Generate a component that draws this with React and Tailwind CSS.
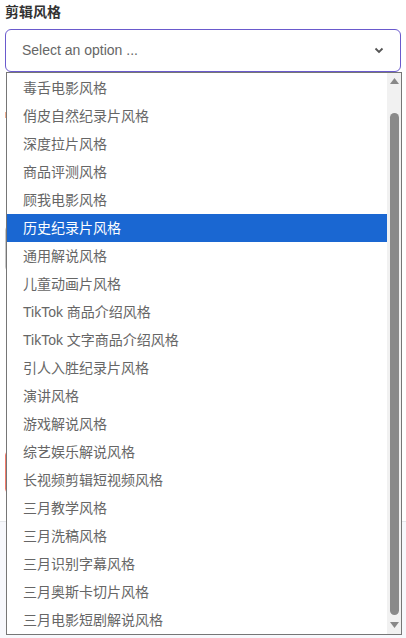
import React from "react";

const items = [
  "毒舌电影风格",
  "俏皮自然纪录片风格",
  "深度拉片风格",
  "商品评测风格",
  "顾我电影风格",
  "历史纪录片风格",
  "通用解说风格",
  "儿童动画片风格",
  "TikTok 商品介绍风格",
  "TikTok 文字商品介绍风格",
  "引人入胜纪录片风格",
  "演讲风格",
  "游戏解说风格",
  "综艺娱乐解说风格",
  "长视频剪辑短视频风格",
  "三月教学风格",
  "三月洗稿风格",
  "三月识别字幕风格",
  "三月奥斯卡切片风格",
  "三月电影短剧解说风格",
];

export default function App() {
  return (
    <div
      className="relative w-[406px] h-[638px] overflow-hidden bg-white"
      style={{ fontFamily: '"Liberation Sans", "Noto Sans CJK SC", sans-serif' }}
    >
      <div className="flex flex-col h-full">
        <div className="px-[5px] pt-[3px]">
          <div className="text-[14px] leading-[18px] font-bold text-[#333]">剪辑风格</div>
          <div className="mt-[8px] h-[43px] rounded-[6px] border border-[#6a5acd] flex items-center justify-between pl-[16px] pr-[16px]">
            <span className="text-[14px] text-[#666]">Select an option ...</span>
            <svg width="10" height="7" viewBox="0 0 10 7" className="text-[#555]">
              <path d="M1.5 1.5 L5 5 L8.5 1.5" fill="none" stroke="currentColor" strokeWidth="1.8" />
            </svg>
          </div>
          <div className="mt-[40px] h-[6px] w-[3px] bg-[#f0b090]"></div>
          <div className="mt-[108px] h-[45px] border border-[#c8c8c8] rounded-[4px]"></div>
          <div className="mt-[180px] h-[42px] border border-[#f27a6a] rounded-[4px]"></div>
        </div>
        <div className="mt-[28px] flex-1 border-t border-[#e5e7eb] bg-[#f7f8fc]"></div>
      </div>

      <div className="absolute left-[6px] top-[72px] w-[396px] h-[563px] border border-[#767676] bg-white flex">
        <div className="flex-1 flex flex-col pt-[1px]">
          {items.map((t, i) => (
            <div
              key={i}
              className={
                i === 5
                  ? "h-[28px] shrink-0 flex items-center pl-[16px] text-[14px] bg-[#1a67d2] text-white"
                  : "h-[28px] shrink-0 flex items-center pl-[16px] text-[14px] text-[#666]"
              }
            >
              {t}
            </div>
          ))}
        </div>
        <div className="w-[14px] bg-[#f1f1f1] flex flex-col items-center relative">
          <svg width="9" height="6" viewBox="0 0 9 6" className="mt-[5px]">
            <path d="M0 6 L4.5 0 L9 6 Z" fill="#888" />
          </svg>
          <div className="mt-[29px] w-[9px] h-[502px] rounded-[5px] bg-[#8a8a8a]"></div>
          <svg width="9" height="6" viewBox="0 0 9 6" className="mt-[7px]">
            <path d="M0 0 L9 0 L4.5 6 Z" fill="#888" />
          </svg>
        </div>
      </div>
    </div>
  );
}
